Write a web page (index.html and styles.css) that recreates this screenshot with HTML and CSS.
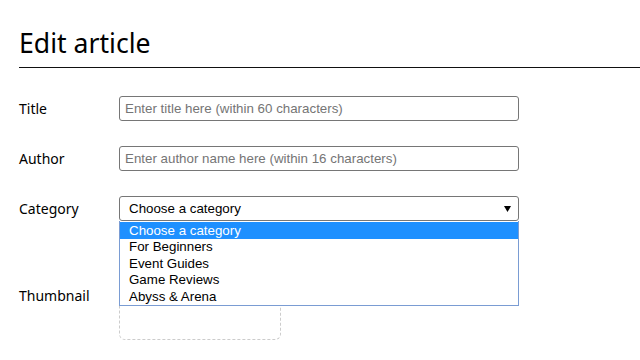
FILE: index.html
```html
<html>
<head>
<meta charset="utf-8" />
<link rel="stylesheet" href="styles.css">
</head>
<body>
<div class="page">
	<h1 class="title">Edit article</h1>
	<div class="form">
		<div class="row">
			<label class="label" for="art_title">Title</label>
			<input id="art_title" class="field" placeholder="Enter title here (within 60 characters)" />
		</div>
		<div class="row">
			<label class="label" for="art_author">Author</label>
			<input id="art_author" class="field" placeholder="Enter author name here (within 16 characters)" />
		</div>
		<div class="row">
			<span class="label">Category</span>
			<div class="select-wrap">
				<div class="field select">
					<span>Choose a category</span>
					<svg class="arrow" width="7" height="6" viewBox="0 0 7 6"><path d="M0 0 H7 L3.5 6 Z" fill="#000"/></svg>
				</div>
				<ul class="options">
					<li class="option selected">Choose a category</li>
					<li class="option">For Beginners</li>
					<li class="option">Event Guides</li>
					<li class="option">Game Reviews</li>
					<li class="option">Abyss &amp; Arena</li>
				</ul>
			</div>
		</div>
		<div class="row">
			<span class="label thumb-label">Thumbnail</span>
			<div class="thumb"></div>
		</div>
	</div>
</div>
</body>
</html>
```
FILE: styles.css
```css
body {
	margin: 0;
	padding: 0;
	background: #fff;
	color: #000;
	font-family: "Noto Sans", "Open Sans", sans-serif;
	overflow: hidden;
}

.page {
	padding-left: 19px;
}

.title {
	margin: 0;
	padding-top: 23px;
	height: 44px;
	font-size: 26.6px;
	font-weight: normal;
	line-height: 40px;
	border-bottom: 1px solid #111;
	box-sizing: content-box;
}

.form {
	display: flex;
	flex-direction: column;
	gap: 25px;
	padding-top: 28px;
}

.row {
	display: flex;
	align-items: center;
}

.label {
	width: 100px;
	font-size: 14px;
}

.thumb-label {
	padding-top: 4px;
}

.field {
	box-sizing: border-box;
	width: 400px;
	height: 25px;
	border: 1px solid #767676;
	border-radius: 3px;
	padding: 0 5px;
	font-family: Arial, "Liberation Sans", sans-serif;
	font-size: 13.33px;
	color: #000;
	margin: 0;
	outline: none;
}

.field::placeholder {
	color: #757575;
}

.select-wrap {
	position: relative;
}

.select {
	display: flex;
	align-items: center;
	justify-content: space-between;
	padding: 0 7px 0 9px;
}

.options {
	position: absolute;
	top: 25px;
	left: 0;
	width: 400px;
	box-sizing: border-box;
	margin: 0;
	padding: 0;
	list-style: none;
	background: #fff;
	border: 1px solid #7a9cd3;
	border-top: 0;
	font-family: Arial, "Liberation Sans", sans-serif;
	font-size: 13.33px;
	z-index: 5;
}

.option {
	height: 16.5px;
	line-height: 16.5px;
	padding-left: 9px;
}

.option.selected {
	background: #1e90ff;
	color: #fff;
	height: 17px;
	line-height: 17px;
	margin-top: 1px;
}

.thumb {
	width: 162px;
	height: 94px;
	box-sizing: border-box;
	border: 1px dashed #ccc;
	border-radius: 6px;
}
```
